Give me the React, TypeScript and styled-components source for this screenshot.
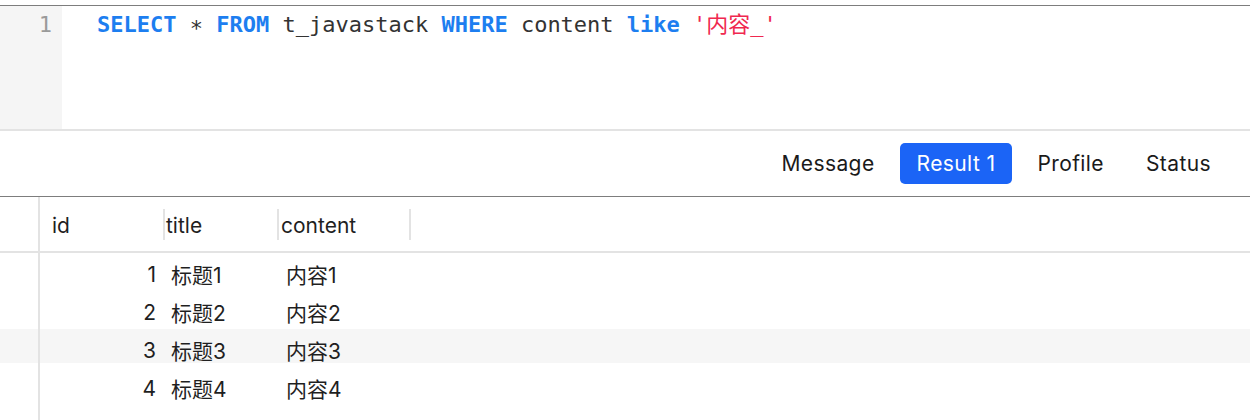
import styled, { createGlobalStyle } from "styled-components";

const GlobalStyle = createGlobalStyle`
  html, body {
    margin: 0;
    padding: 0;
    background: #ffffff;
  }
  body {
    font-family: Inter, "Noto Sans CJK SC", "Liberation Sans", sans-serif;
    color: #1f1f1f;
  }
`;

type Kind = "keyword" | "string" | "op";
type Token = { text: string; kind?: Kind };

const sqlTokens: Token[] = [
  { text: "SELECT", kind: "keyword" },
  { text: " " },
  { text: "*", kind: "op" },
  { text: " " },
  { text: "FROM", kind: "keyword" },
  { text: " t_javastack " },
  { text: "WHERE", kind: "keyword" },
  { text: " content " },
  { text: "like", kind: "keyword" },
  { text: " " },
  { text: "'内容_'", kind: "string" },
];

const tabs = ["Message", "Result 1", "Profile", "Status"];

const rows = [
  { id: 1, title: "标题1", content: "内容1" },
  { id: 2, title: "标题2", content: "内容2" },
  { id: 3, title: "标题3", content: "内容3" },
  { id: 4, title: "标题4", content: "内容4" },
];

export default function App() {
  return (
    <>
      <GlobalStyle />
      <Page>
        <Editor>
          <Gutter>1</Gutter>
          <Code>
            {sqlTokens.map((t, i) => (
              <CodeToken key={i} $kind={t.kind}>
                {t.text}
              </CodeToken>
            ))}
          </Code>
        </Editor>

        <TabBar>
          {tabs.map((tab) => (
            <Tab key={tab} $active={tab === "Result 1"}>
              {tab}
            </Tab>
          ))}
        </TabBar>

        <Table>
          <HeaderRow>
            <RowHead />
            <HeadCell $pad={12}>id</HeadCell>
            <HeadCell $pad={1}>title</HeadCell>
            <HeadCell $pad={2}>content</HeadCell>
            <span />
          </HeaderRow>
          {rows.map((row) => (
            <DataRow key={row.id} $selected={row.id === 3}>
              <RowHead />
              <IdCell>{row.id}</IdCell>
              <Cell $pad={6}>{row.title}</Cell>
              <Cell $pad={7}>{row.content}</Cell>
              <span />
            </DataRow>
          ))}
          <DataRow $selected={false}>
            <RowHead />
          </DataRow>
        </Table>
      </Page>
    </>
  );
}

const Page = styled.div`
  width: 1250px;
  height: 420px;
  overflow: hidden;
  padding-top: 5px;
  box-sizing: border-box;
  display: flex;
  flex-direction: column;
`;

const Editor = styled.div`
  display: flex;
  height: 126px;
  border-top: 1px solid #7d7d7d;
  border-bottom: 2px solid #e3e3e3;
  font-family: "DejaVu Sans Mono", "Noto Sans CJK SC", monospace;
  font-size: 22px;
  line-height: 26px;
  flex-shrink: 0;
  box-sizing: border-box;
`;

const Gutter = styled.div`
  width: 62px;
  background: #f5f5f5;
  color: #9a9a9a;
  text-align: right;
  padding: 6px 10px 0 0;
  box-sizing: border-box;
`;

const Code = styled.div`
  flex: 1;
  padding: 6px 0 0 35px;
  white-space: pre;
  color: #333333;
`;

const CodeToken = styled.span<{ $kind?: Kind }>`
  color: ${({ $kind }) =>
    $kind === "keyword" ? "#1d7ef0" : $kind === "string" ? "#f0284f" : "#333333"};
  font-weight: ${({ $kind }) => ($kind === "keyword" ? 700 : 400)};
  display: ${({ $kind }) => ($kind === "op" ? "inline-block" : "inline")};
  transform: ${({ $kind }) => ($kind === "op" ? "translateY(4px)" : "none")};
`;

const TabBar = styled.div`
  height: 66px;
  display: flex;
  justify-content: flex-end;
  align-items: center;
  gap: 8px;
  padding-right: 22px;
  border-bottom: 1px solid #7d7d7d;
  box-sizing: border-box;
  flex-shrink: 0;
`;

const Tab = styled.div<{ $active: boolean }>`
  height: 41px;
  padding: 0 17px;
  display: flex;
  align-items: center;
  border-radius: 5px;
  font-size: 21px;
  letter-spacing: 0.4px;
  background: ${({ $active }) => ($active ? "#1b64f6" : "transparent")};
  color: ${({ $active }) => ($active ? "#ffffff" : "#1a1a1a")};
`;

const Table = styled.div`
  flex: 1;
  display: flex;
  flex-direction: column;
  font-size: 21px;
`;

const gridColumns = "40px 125px 114px 132px 1fr";

const HeaderRow = styled.div`
  display: grid;
  grid-template-columns: ${gridColumns};
  height: 56px;
  border-bottom: 2px solid #e3e3e3;
  box-sizing: border-box;
  align-items: center;
  flex-shrink: 0;
`;

const RowHead = styled.div`
  align-self: stretch;
  border-right: 2px solid #e3e3e3;
`;

const HeadCell = styled.div<{ $pad: number }>`
  height: 31px;
  display: flex;
  align-items: center;
  padding-left: ${({ $pad }) => $pad}px;
  padding-top: 2px;
  box-sizing: border-box;
  border-right: 2px solid #e3e3e3;
  color: #1f1f1f;
`;

const DataRow = styled.div<{ $selected: boolean }>`
  display: grid;
  grid-template-columns: ${gridColumns};
  height: 38px;
  flex-shrink: 0;
  align-items: center;
  background: ${({ $selected }) =>
    $selected ? "linear-gradient(#f6f6f6 0 34px, transparent 34px)" : "transparent"};
  &:last-child {
    flex: 1;
  }
`;

const Cell = styled.div<{ $pad: number }>`
  padding-left: ${({ $pad }) => $pad}px;
  padding-top: 4px;
  color: #1f1f1f;
`;

const IdCell = styled.div`
  text-align: right;
  padding-right: 9px;
  padding-top: 4px;
  color: #1f1f1f;
`;
